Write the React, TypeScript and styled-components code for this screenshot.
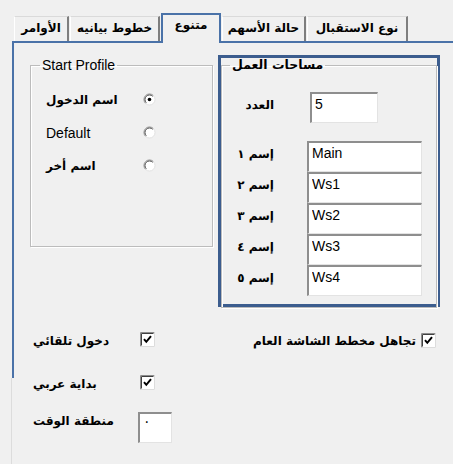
import styled, { createGlobalStyle } from 'styled-components';

const GlobalStyle = createGlobalStyle`
  html, body {
    margin: 0;
    padding: 0;
    background: #f0f0f0;
  }
`;

const ARABIC = `"DejaVu Sans", "Liberation Sans", sans-serif`;
const LATIN = `"Liberation Sans", Arial, sans-serif`;

const tabs = [
  { label: 'الأوامر', w: 55 },
  { label: 'خطوط بيانيه', w: 90 },
  { label: 'متنوع', w: 60, active: true },
  { label: 'حالة الأسهم', w: 84 },
  { label: 'نوع الاستقبال', w: 101 },
];

const names = ['Main', 'Ws1', 'Ws2', 'Ws3', 'Ws4'];
const nameLabels = ['إسم ١', 'إسم ٢', 'إسم ٣', 'إسم ٤', 'إسم ٥'];

const Radio = ({ checked }: { checked?: boolean }) => (
  <svg width="13" height="13" viewBox="0 0 13 13">
    <circle cx="6.5" cy="6.5" r="5.5" fill="#fff" />
    <path d="M2.6 10.4 A5.5 5.5 0 0 1 10.4 2.6" fill="none" stroke="#8a8a8a" strokeWidth="1" />
    <path d="M3.3 9.7 A4.5 4.5 0 0 1 9.7 3.3" fill="none" stroke="#505050" strokeWidth="1" />
    <path d="M10.4 2.6 A5.5 5.5 0 0 1 2.6 10.4" fill="none" stroke="#e2e2e2" strokeWidth="1" />
    {checked && <circle cx="6.5" cy="6.5" r="1.8" fill="#000" />}
  </svg>
);

const Check = () => (
  <svg width="15" height="15" viewBox="0 0 15 15">
    <rect x="0" y="0" width="15" height="15" fill="#fff" />
    <path d="M0.5 14.5 V0.5 H14.5" fill="none" stroke="#8c8c8c" />
    <path d="M1.5 13.5 V1.5 H13.5" fill="none" stroke="#404040" />
    <path d="M0.5 14.5 H14.5 V0.5" fill="none" stroke="#dcdcdc" />
    <path d="M4 7.2 L6.3 9.8 L11 4.2" fill="none" stroke="#000" strokeWidth="2" />
  </svg>
);

const App = () => {
  return (
    <Window>
      <GlobalStyle />
      <TabStrip>
        {tabs.map((t) => (
          <Tab key={t.label} $w={t.w} $active={!!t.active}>
            {t.label}
          </Tab>
        ))}
      </TabStrip>
      <Panel>
        <TopRow>
          <GroupBox $w={183} $h={190} $top={2}>
            <Legend>Start Profile</Legend>
            <RadioList>
              <RadioRow>
                <ArabicLabel>اسم الدخول</ArabicLabel>
                <Radio checked />
              </RadioRow>
              <RadioRow>
                <LatinLabel>Default</LatinLabel>
                <Radio />
              </RadioRow>
              <RadioRow>
                <ArabicLabel>اسم أخر</ArabicLabel>
                <Radio />
              </RadioRow>
            </RadioList>
          </GroupBox>
          <FocusFrame>
            <GroupBox $w={216} $h={250} $top={0}>
              <Legend $arabic $left={8}>مساحات العمل</Legend>
              <FieldGrid>
                <FieldLabel>العدد</FieldLabel>
                <Field readOnly value="5" $w={68} $shift={3} />
                <Spacer />
                {names.map((n, i) => (
                  <FieldRow key={n}>
                    <FieldLabel>{nameLabels[i]}</FieldLabel>
                    <Field readOnly value={n} $w={115} />
                  </FieldRow>
                ))}
              </FieldGrid>
            </GroupBox>
          </FocusFrame>
        </TopRow>
        <BottomArea>
          <OptionColumn>
            <OptionRow $h={43}>
              <OptionLabel>دخول تلقائي</OptionLabel>
              <Check />
            </OptionRow>
            <OptionRow $h={37}>
              <OptionLabel>بداية عربي</OptionLabel>
              <Check />
            </OptionRow>
            <OptionRow $h={31}>
              <OptionLabel>منطقة الوقت</OptionLabel>
              <Field readOnly value="٠" $w={34} $shift={-2} $pad={14} />
            </OptionRow>
          </OptionColumn>
          <RightOption>
            <OptionLabel>تجاهل مخطط الشاشة العام</OptionLabel>
            <Check />
          </RightOption>
        </BottomArea>
      </Panel>
      <PageEdge />
    </Window>
  );
};

export default App;

const Window = styled.div`
  width: 453px;
  height: 464px;
  box-sizing: border-box;
  padding: 13px 0 0 12px;
  background: #f0f0f0;
  overflow: hidden;
`;

const TabStrip = styled.div`
  display: flex;
  align-items: flex-end;
  gap: 1px;
  height: 28px;
  padding-left: 2px;
`;

const Tab = styled.div<{ $w: number; $active: boolean }>`
  box-sizing: border-box;
  width: ${(p) => p.$w}px;
  height: ${(p) => (p.$active ? 30 : 25)}px;
  margin-bottom: ${(p) => (p.$active ? -2 : 0)}px;
  position: relative;
  z-index: ${(p) => (p.$active ? 1 : 0)};
  background: #f0f0f0;
  border-top: ${(p) => (p.$active ? '2px solid #4a72a8' : '1px solid #dadada')};
  border-left: ${(p) => (p.$active ? '2px solid #4a72a8' : '1px solid #ffffff')};
  border-right: ${(p) => (p.$active ? '2px solid #4a72a8' : '2px solid #7e7e7e')};
  direction: rtl;
  font-family: ${ARABIC};
  font-weight: bold;
  font-size: 12px;
  color: #000;
  text-align: center;
  padding-top: ${(p) => (p.$active ? 3 : 4)}px;
  white-space: nowrap;
`;

const Panel = styled.div`
  height: 337px;
  border-top: 2px solid #4a72a8;
  border-left: 2px solid #4a72a8;
  box-sizing: border-box;
  padding-left: 16px;
`;

const PageEdge = styled.div`
  margin-left: -1px;
  height: 100px;
  border-left: 1px solid #dcdcdc;
`;

const TopRow = styled.div`
  display: flex;
  align-items: flex-start;
  gap: 5px;
  padding-top: 12px;
`;

const GroupBox = styled.fieldset<{ $w: number; $h: number; $top: number }>`
  box-sizing: border-box;
  width: ${(p) => p.$w}px;
  height: ${(p) => p.$h}px;
  margin: ${(p) => p.$top}px 0 0 0;
  padding: 0;
  border: 1px solid #bcbcbc;
  box-shadow: inset 1px 1px 0 #ffffff, 1px 1px 0 #ffffff;
`;

const Legend = styled.legend<{ $arabic?: boolean; $left?: number }>`
  margin-left: ${(p) => p.$left ?? 9}px;
  padding: 0 2px;
  height: ${(p) => (p.$arabic ? 14 : 16)}px;
  line-height: ${(p) => (p.$arabic ? 14 : 16)}px;
  font-family: ${(p) => (p.$arabic ? ARABIC : LATIN)};
  font-weight: ${(p) => (p.$arabic ? 'bold' : 'normal')};
  font-size: ${(p) => (p.$arabic ? 12.5 : 14)}px;
  direction: ${(p) => (p.$arabic ? 'rtl' : 'ltr')};
  color: #000;
`;

const RadioList = styled.div`
  display: flex;
  flex-direction: column;
  gap: 20px;
  padding: 20px 0 0 15px;
`;

const RadioRow = styled.div`
  display: flex;
  align-items: center;
  height: 13px;
  & > :first-child {
    width: 97px;
  }
`;

const ArabicLabel = styled.span`
  font-family: ${ARABIC};
  font-weight: bold;
  font-size: 12px;
  color: #000;
  white-space: nowrap;
`;

const LatinLabel = styled.span`
  font-family: ${LATIN};
  font-size: 14px;
  color: #000;
`;

const FocusFrame = styled.div`
  box-sizing: border-box;
  width: 222px;
  height: 252px;
  border: 3px solid #3c5d8e;
`;

const FieldGrid = styled.div`
  display: grid;
  grid-template-columns: 38px auto;
  column-gap: 33px;
  align-items: start;
  padding: 20px 0 0 14px;
`;

const FieldRow = styled.div`
  display: contents;
`;

const Spacer = styled.div`
  grid-column: 1 / span 2;
  height: 18px;
`;

const FieldLabel = styled.div`
  font-family: ${ARABIC};
  font-weight: bold;
  font-size: 12px;
  color: #000;
  direction: rtl;
  text-align: right;
  white-space: nowrap;
  padding-top: 6px;
`;

const Field = styled.input<{ $w: number; $shift?: number; $pad?: number }>`
  box-sizing: border-box;
  width: ${(p) => p.$w}px;
  height: 31px;
  margin: 0 0 0 ${(p) => p.$shift ?? 0}px;
  padding: 0 0 ${(p) => p.$pad ?? 8}px 3px;
  background: #ffffff;
  border-top: 2px solid #8e8e8e;
  border-left: 2px solid #8e8e8e;
  border-right: 1px solid #e3e3e3;
  border-bottom: 1px solid #e3e3e3;
  font-family: ${LATIN};
  font-size: 14px;
  color: #000;
  outline: none;
`;

const BottomArea = styled.div`
  display: flex;
  justify-content: space-between;
  align-items: flex-start;
  padding: 25px 17px 0 3px;
`;

const OptionColumn = styled.div`
  display: flex;
  flex-direction: column;
`;

const OptionRow = styled.div<{ $h: number }>`
  display: flex;
  align-items: flex-start;
  height: ${(p) => p.$h}px;
  & > :first-child {
    width: 107px;
    padding-top: 2px;
  }
`;

const OptionLabel = styled.span`
  font-family: ${ARABIC};
  font-weight: bold;
  font-size: 12px;
  color: #000;
  white-space: nowrap;
  direction: rtl;
  text-align: left;
`;

const RightOption = styled.div`
  display: flex;
  align-items: center;
  gap: 5px;
  padding-top: 1px;
`;
